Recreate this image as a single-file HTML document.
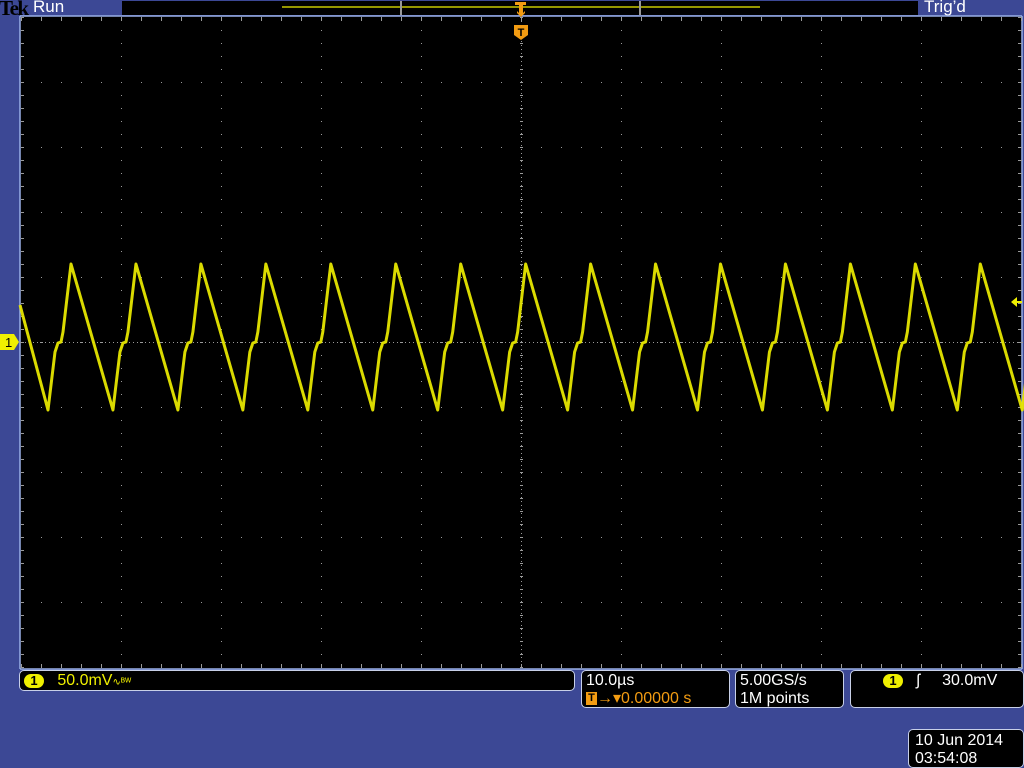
<!DOCTYPE html>
<html><head><meta charset="utf-8"><style>
html,body{margin:0;padding:0;width:1024px;height:768px;overflow:hidden;background:#3c4895;font-family:"Liberation Sans",sans-serif;}
.abs{position:absolute}
.box{position:absolute;background:#000;border:1px solid #c8d0e8;border-radius:5px;color:#fff;font-size:16px;line-height:18px;box-sizing:border-box;}
.one{display:inline-block;width:20px;height:14px;border-radius:7px;background:#f0f000;color:#000;font-size:13px;line-height:14px;text-align:center;font-weight:bold;vertical-align:middle}
</style></head><body>
<div class="abs" style="left:0;top:0;width:1024px;height:16px;background:#3c4895"></div>
<div class="abs" style="left:-1px;top:-4px;font-family:'Liberation Serif',serif;font-size:21px;font-weight:bold;color:#000;letter-spacing:-1.5px">Tek</div>
<div class="abs" style="left:33px;top:-3px;font-size:17px;color:#fff">Run</div>
<div class="abs" style="left:924px;top:-3px;font-size:17px;color:#fff">Trig’d</div>
<svg class="abs" style="left:0;top:0" width="1024" height="768" xmlns="http://www.w3.org/2000/svg">
<rect x="122" y="1" width="796" height="14" fill="#000"/>
<line x1="282" y1="7" x2="760" y2="7" stroke="#f0f000" stroke-width="1.2"/>
<rect x="400" y="1" width="2" height="14" fill="#999"/>
<rect x="639" y="1" width="2" height="14" fill="#999"/>
<rect x="20" y="16" width="1002" height="653" fill="#000"/>
<line x1="20" y1="16" x2="1022" y2="16" stroke="#9ab0e8" stroke-width="1.5"/>
<line x1="20" y1="16" x2="20" y2="669" stroke="#9ab0e8" stroke-width="1.5"/>
<line x1="1022" y1="16" x2="1022" y2="669" stroke="#9ab0e8" stroke-width="1.5"/>
<line x1="20" y1="669" x2="1022" y2="669" stroke="#9ab0e8" stroke-width="1.5"/>
<g id="grid" fill="#9a9a9a"></g>
<path id="wave" fill="none" stroke="#e6e600" stroke-width="3" stroke-linejoin="round" opacity="0.95"/>
<path d="M515 2h11v3h-3v8l2 -2v2l-4 4l-4 -4v-2l2 2v-8h-4z" fill="#f39c12"/>
<path d="M514 25h14v10l-7 5l-7-5z" fill="#f39c12"/>
<text x="521" y="36" fill="#000" font-size="11" font-weight="bold" text-anchor="middle" font-family="Liberation Sans">T</text>
<path d="M0 334h14l5 8l-5 8h-14z" fill="#f0f000"/>
<text x="5" y="347" fill="#000" font-size="13" font-family="Liberation Sans">1</text>
<path d="M1011 302l6-5v4h5v2h-5v4z" fill="#f0f000"/>
</svg>
<div class="box" style="left:19px;top:670px;width:556px;height:21px;padding:1px 0 0 4px;color:#f0f000"><span class="one">1</span>&nbsp;&nbsp;&nbsp;50.0mV<span style="font-size:10px">∿ᴮᵂ</span></div>
<div class="box" style="left:581px;top:670px;width:149px;height:38px;padding:1px 0 0 4px">10.0µs<br><span style="color:#f39c12"><span style="display:inline-block;width:11px;height:13px;background:#f39c12;color:#000;font-size:11px;line-height:13px;text-align:center;font-weight:bold;vertical-align:middle">T</span>→▾0.00000 s</span></div>
<div class="box" style="left:735px;top:670px;width:109px;height:38px;padding:1px 0 0 4px">5.00GS/s<br>1M points</div>
<div class="box" style="left:850px;top:670px;width:174px;height:38px;padding:1px 0 0 32px"><span class="one">1</span>&nbsp;&nbsp;&nbsp;ʃ&nbsp;&nbsp;&nbsp;&nbsp;&nbsp;30.0mV</div>
<div class="box" style="left:908px;top:729px;width:116px;height:39px;padding:2px 0 0 6px">10 Jun 2014<br>03:54:08</div>
<script>
var g=document.getElementById('grid'),s='';
function d(x,y,w,h){s+='<rect x="'+x+'" y="'+y+'" width="'+(w||1)+'" height="'+(h||1)+'"/>';}
for(var i=0;i<=10;i++){var y=17+i*65;for(var x=21;x<1022;x+=20)d(x,y);}
for(var j=0;j<=10;j++){var x=21+j*100;for(var y=17;y<668;y+=13)d(x,y);}
for(var x=21;x<1022;x+=4)d(x,342);
for(var y=17;y<668;y+=4)d(521,y);
for(var x=21;x<1022;x+=20){d(x-1,342,3,1);d(x,18,1,3);d(x,664,1,3);}
for(var y=17;y<668;y+=13){d(520,y,3,1);d(21,y,3,1);d(1018,y,3,1);}
g.innerHTML=s;
var p='M20 305L48 410',P=64.95;
for(var k=0;k<16;k++){var t=48+k*P;
p+=' L'+(t+7)+' 352 L'+(t+10)+' 343 L'+(t+13)+' 342 L'+(t+15)+' 332 L'+(t+23)+' 264 L'+(t+P)+' 410';}
document.getElementById('wave').setAttribute('d',p);
</script>
<style>#wave{clip-path:inset(0)}</style>
</body></html>
